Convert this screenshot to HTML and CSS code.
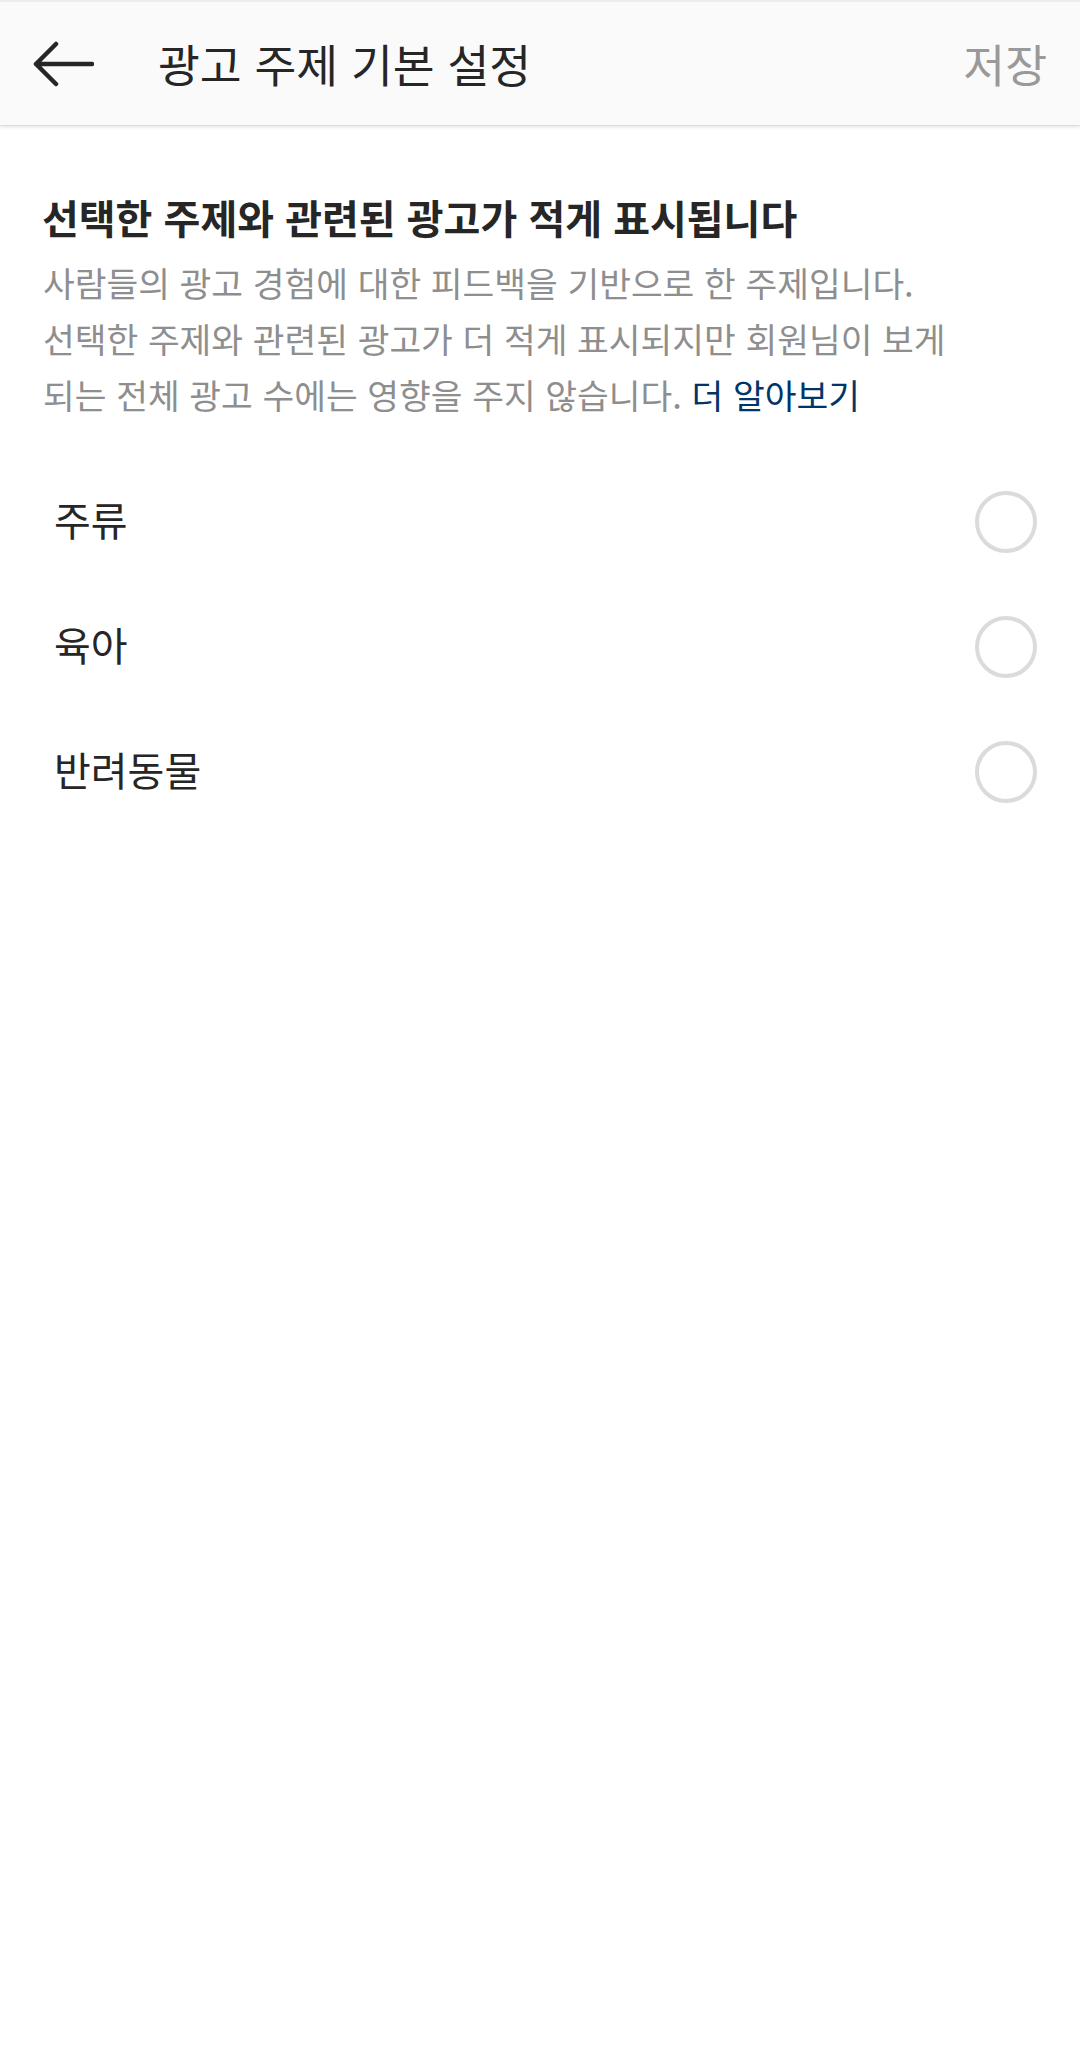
FILE: index.html
```html
<!DOCTYPE html>
<html lang="ko">
<head>
  <meta charset="UTF-8">
  <title>광고 주제 기본 설정</title>
  <link rel="stylesheet" href="styles.css">
</head>
<body>
  <header class="topbar">
    <button class="back" aria-label="뒤로">
      <svg width="62" height="46" viewBox="0 0 62 46">
        <path d="M4 23 H60 M24 3 L4 23 L24 43" fill="none" stroke="#262626" stroke-width="4.5" stroke-linecap="round" stroke-linejoin="round"/>
      </svg>
    </button>
    <h1 class="title">광고 주제 기본 설정</h1>
    <span class="save">저장</span>
  </header>

  <main>
    <section class="intro">
      <h2>선택한 주제와 관련된 광고가 적게 표시됩니다</h2>
      <p>사람들의 광고 경험에 대한 피드백을 기반으로 한 주제입니다.<br>
        선택한 주제와 관련된 광고가 더 적게 표시되지만 회원님이 보게<br>
        되는 전체 광고 수에는 영향을 주지 않습니다. <a href="#">더 알아보기</a></p>
    </section>

    <ul class="topics">
      <li><span class="label">주류</span><span class="radio"></span></li>
      <li><span class="label">육아</span><span class="radio"></span></li>
      <li><span class="label">반려동물</span><span class="radio"></span></li>
    </ul>
  </main>
</body>
</html>
```

FILE: styles.css
```css
html, body {
  margin: 0;
  padding: 0;
  background: #fff;
}

body {
  font-family: "Noto Sans CJK KR", "Noto Sans", sans-serif;
  color: #262626;
}

.topbar {
  height: 126px;
  box-sizing: border-box;
  display: flex;
  align-items: center;
  padding: 0 33px 0 32px;
  background: #fafafa;
  border-top: 2px solid #ededed;
  border-bottom: 1px solid #dedede;
  box-shadow: 0 1px 4px rgba(0,0,0,0.12);
}

.back {
  background: none;
  border: none;
  padding: 0;
  margin: 0;
  width: 62px;
  height: 46px;
  display: flex;
}

.title {
  flex: 1;
  margin: 0 0 0 64px;
  font-size: 45.5px;
  font-weight: 400;
  line-height: 1;
  color: #262626;
}

.save {
  font-size: 45.5px;
  line-height: 1;
  color: #999;
}

main {
  padding: 0 43px 0 42px;
}

.intro {
  padding-top: 68px;
}

.intro h2 {
  margin: 0;
  font-size: 40px;
  font-weight: 700;
  line-height: 46px;
  color: #262626;
}

.intro p {
  margin: 14px 0 0 1px;
  font-size: 34.5px;
  line-height: 56px;
  color: #8e8e8e;
}

.intro a {
  color: #003569;
  text-decoration: none;
}

.topics {
  list-style: none;
  margin: 37px 0 0;
  padding: 0;
}

.topics li {
  height: 125px;
  display: flex;
  align-items: center;
  justify-content: space-between;
  padding-left: 12px;
  font-size: 40px;
  color: #262626;
}

.label {
  margin-bottom: 6px;
}

.radio {
  width: 62px;
  height: 62px;
  box-sizing: border-box;
  border: 4px solid #dbdbdb;
  border-radius: 50%;
}
```
